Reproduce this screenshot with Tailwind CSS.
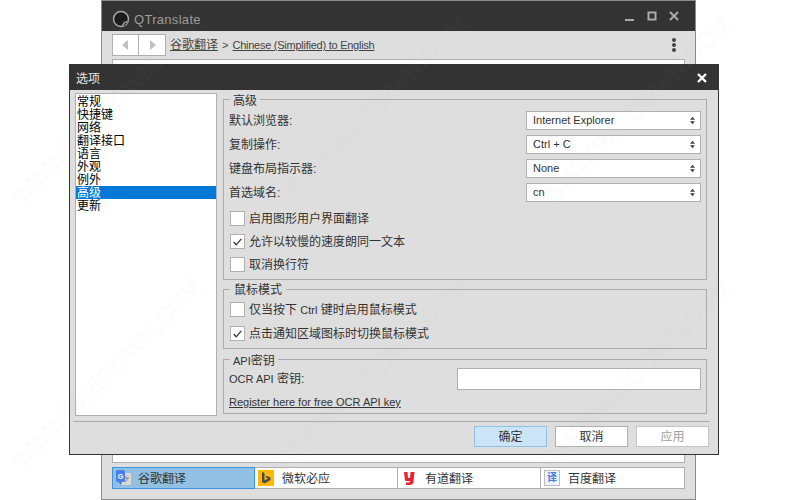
<!DOCTYPE html>
<html lang="zh">
<head>
<meta charset="utf-8">
<script src="https://cdn.jsdelivr.net/npm/@tailwindcss/browser@4"></script>
</head>
<body class="w-[790px] h-[500px] overflow-hidden bg-white relative font-['Liberation_Sans','Noto_Sans_CJK_SC',sans-serif] text-[12px] text-[#333]">

<!-- Back window -->
<div class="absolute left-[101px] top-0 w-[595px] h-[500px] border border-[#8a8a8a] bg-[#dedede] flex flex-col">
  <div class="h-[30px] shrink-0 bg-[#333333] flex items-center">
    <svg class="ml-[10px] mt-[6px]" width="18" height="18" viewBox="0 0 18 18"><circle cx="9" cy="9" r="7.5" fill="#1c1c1c" stroke="#a8a8a8" stroke-width="1.5"/><path d="M11 17 A4 4 0 0 1 16 12" fill="#333" stroke="#a8a8a8" stroke-width="1.2"/></svg>
    <span class="ml-[4px] mt-[8px] text-[13px] text-[#9c9c9c] tracking-[0.3px]">QTranslate</span>
    <div class="ml-auto flex items-center gap-[12px] mr-[16px]">
      <svg width="10" height="10" viewBox="0 0 10 10"><rect x="0" y="8" width="9" height="2" fill="#aaa"/></svg>
      <svg width="10" height="10" viewBox="0 0 10 10"><rect x="1.5" y="1.5" width="7" height="7" fill="none" stroke="#aaa" stroke-width="2"/></svg>
      <svg width="10" height="10" viewBox="0 0 10 10"><path d="M1 1 L9 9 M9 1 L1 9" stroke="#aaa" stroke-width="2"/></svg>
    </div>
  </div>
  <div class="h-[28px] shrink-0 flex items-center pl-[10px] pr-[8px]">
    <div class="w-[54px] h-[22px] flex bg-white border border-[#b0b0b0]">
      <div class="w-[26px] flex items-center justify-center border-r border-[#b0b0b0]"><svg width="7" height="10" viewBox="0 0 7 10"><path d="M6 0 L0 5 L6 10 Z" fill="#c0c0c0"/></svg></div>
      <div class="flex-1 flex items-center justify-center"><svg width="7" height="10" viewBox="0 0 7 10"><path d="M1 0 L7 5 L1 10 Z" fill="#c0c0c0"/></svg></div>
    </div>
    <span class="ml-[4px] underline text-[#444]">谷歌翻译</span>
    <span class="ml-[4px] text-[11px] text-[#444]">&gt;</span>
    <span class="ml-[4px] underline text-[#444] text-[11px] tracking-[-0.25px]">Chinese (Simplified) to English</span>
    <div class="ml-auto flex flex-col gap-[1px] mr-[11px]">
      <span class="w-[4px] h-[4px] rounded-full bg-[#444]"></span>
      <span class="w-[4px] h-[4px] rounded-full bg-[#444]"></span>
      <span class="w-[4px] h-[4px] rounded-full bg-[#444]"></span>
    </div>
  </div>
  <div class="flex-1 mx-[10px] bg-white border border-[#b0b0b0]"></div>
  <div class="h-[22px] shrink-0 mx-[10px] mt-[4px] mb-[10px] flex bg-white border border-[#b0b0b0]">
    <div class="w-[143px] -m-[1px] mr-0 h-[22px] flex items-center bg-[#92c0e4] border border-[#3b94e4]">
      <svg class="ml-[2px]" width="17" height="17" viewBox="0 0 17 17"><rect x="7" y="3" width="9" height="12" rx="1" fill="#d8d8d8"/><path d="M9 8h5M11.500 6.500v1.500M10 12l3-4" stroke="#8a8a8a" stroke-width="1" fill="none"/><rect x="1" y="0" width="9" height="12" rx="1.500" fill="#4a7fe8"/><path d="M6 12v2.500l-2.500-2.500z" fill="#3a62c0"/><text x="5.500" y="8.500" font-size="7" font-weight="700" fill="#fff" text-anchor="middle">G</text></svg>
      <span class="ml-[6px] mt-[1px]">谷歌翻译</span>
    </div>
    <div class="w-[143px] flex items-center border-r border-[#b0b0b0]">
      <svg class="ml-[3px]" width="16" height="16" viewBox="0 0 16 16"><rect width="16" height="16" fill="#ffb900"/><path d="M4 2 L6.500 3 V10.500 L10 8.500 L8.300 7.500 L7.500 5.500 L12.500 7.500 V10 L6.500 13.500 L4 12 Z" fill="#4a4a4a"/></svg>
      <span class="ml-[8px] mt-[1px]">微软必应</span>
    </div>
    <div class="w-[143px] flex items-center border-r border-[#b0b0b0]">
      <svg class="ml-[6px]" width="11" height="13" viewBox="0 0 11 13"><path d="M0 0 H3.500 L4 6 H6 L6.500 0 H10.500 L9.500 9.500 Q9 13 5.500 13 H2 V10.500 H5 Q6 10.500 6 9 H2.500 Q1 9 0.800 7.500 Z" fill="#e8232e"/></svg>
      <span class="ml-[10px] mt-[1px]">有道翻译</span>
    </div>
    <div class="flex-1 flex items-center">
      <div class="ml-[3px] w-[16px] h-[16px] border border-[#bdbdbd] bg-[#eef2fa] flex items-center justify-center text-[10px] font-bold leading-none text-[#3f7fe0]">译</div>
      <span class="ml-[8px] mt-[1px]">百度翻译</span>
    </div>
  </div>
</div>

<!-- Options dialog -->
<div class="absolute left-[69px] top-[64px] w-[650px] h-[391px] border border-[#333333] bg-[#dedede] flex flex-col">
  <div class="h-[25px] shrink-0 bg-[#333333] flex items-center justify-between text-white">
    <span class="ml-[6px] mt-[2px] text-[12px] text-[#e8e8e8]">选项</span>
    <svg class="mr-[11px]" width="10" height="10" viewBox="0 0 10 10"><path d="M1 1 L9 9 M9 1 L1 9" stroke="#fff" stroke-width="2.400"/></svg>
  </div>
  <div class="flex-1 flex pl-[5px]">
    <div class="w-[142px] mt-[3px] h-[323px] bg-white border border-[#b0b0b0] pt-[1px] text-black leading-[15px]">
      <div class="pl-[1px] h-[13px]">常规</div>
      <div class="pl-[1px] h-[13px]">快捷键</div>
      <div class="pl-[1px] h-[13px]">网络</div>
      <div class="pl-[1px] h-[13px]">翻译接口</div>
      <div class="pl-[1px] h-[13px]">语言</div>
      <div class="pl-[1px] h-[13px]">外观</div>
      <div class="pl-[1px] h-[13px]">例外</div>
      <div class="pl-[1px] h-[13px] bg-[#0078d7] text-white">高级</div>
      <div class="pl-[1px] h-[13px]">更新</div>
    </div>
    <div class="ml-[6px] w-[484px] flex flex-col pt-[9px]">
      <!-- group 高级 -->
      <div class="relative h-[181px] border border-[#ababab] px-[5px] pt-[11px]">
        <span class="absolute left-[6px] -top-[6px] px-[3px] h-[14px] leading-[14px] bg-[#dedede]">高级</span>
        <div class="flex flex-col gap-[5px]">
          <div class="h-[19px] flex items-center justify-between"><span>默认浏览器:</span>
            <div class="w-[175px] h-[19px] flex items-center justify-between bg-white border border-[#b0b0b0] pl-[6px] pr-[5px]"><span class="text-[11px]">Internet Explorer</span><svg width="5" height="9" viewBox="0 0 6 9"><path d="M3 0 L6 3.500 H0 Z M3 9 L0 5.500 H6 Z" fill="#444"/></svg></div>
          </div>
          <div class="h-[19px] flex items-center justify-between"><span>复制操作:</span>
            <div class="w-[175px] h-[19px] flex items-center justify-between bg-white border border-[#b0b0b0] pl-[6px] pr-[5px]"><span class="text-[11px]">Ctrl + C</span><svg width="5" height="9" viewBox="0 0 6 9"><path d="M3 0 L6 3.500 H0 Z M3 9 L0 5.500 H6 Z" fill="#444"/></svg></div>
          </div>
          <div class="h-[19px] flex items-center justify-between"><span>键盘布局指示器:</span>
            <div class="w-[175px] h-[19px] flex items-center justify-between bg-white border border-[#b0b0b0] pl-[6px] pr-[5px]"><span class="text-[11px]">None</span><svg width="5" height="9" viewBox="0 0 6 9"><path d="M3 0 L6 3.500 H0 Z M3 9 L0 5.500 H6 Z" fill="#444"/></svg></div>
          </div>
          <div class="h-[19px] flex items-center justify-between"><span>首选域名:</span>
            <div class="w-[175px] h-[19px] flex items-center justify-between bg-white border border-[#b0b0b0] pl-[6px] pr-[5px]"><span class="text-[11px]">cn</span><svg width="5" height="9" viewBox="0 0 6 9"><path d="M3 0 L6 3.500 H0 Z M3 9 L0 5.500 H6 Z" fill="#444"/></svg></div>
          </div>
        </div>
        <div class="flex flex-col gap-[8px] pt-[9px] pl-[1px]">
          <div class="h-[15px] flex items-center gap-[4px]"><span class="w-[15px] h-[15px] bg-white border border-[#b0b0b0]"></span><span>启用图形用户界面翻译</span></div>
          <div class="h-[15px] flex items-center gap-[4px]"><span class="w-[15px] h-[15px] bg-white border border-[#b0b0b0] flex items-center justify-center"><svg width="9" height="8" viewBox="0 0 9 8"><path d="M0.700 4 L3.200 6.800 L8.300 0.800" fill="none" stroke="#333" stroke-width="1.300"/></svg></span><span>允许以较慢的速度朗同一文本</span></div>
          <div class="h-[15px] flex items-center gap-[4px]"><span class="w-[15px] h-[15px] bg-white border border-[#b0b0b0]"></span><span>取消换行符</span></div>
        </div>
      </div>
      <!-- group 鼠标模式 -->
      <div class="relative h-[60px] mt-[9px] border border-[#ababab] pl-[6px] pt-[12px]">
        <span class="absolute left-[6px] -top-[7px] px-[4px] h-[14px] leading-[14px] bg-[#dedede]">鼠标模式</span>
        <div class="flex flex-col gap-[9px]">
          <div class="h-[15px] flex items-center gap-[4px]"><span class="w-[15px] h-[15px] bg-white border border-[#b0b0b0]"></span><span>仅当按下 <span class="text-[11px]">Ctrl</span> 键时启用鼠标模式</span></div>
          <div class="h-[15px] flex items-center gap-[4px]"><span class="w-[15px] h-[15px] bg-white border border-[#b0b0b0] flex items-center justify-center"><svg width="9" height="8" viewBox="0 0 9 8"><path d="M0.700 4 L3.200 6.800 L8.300 0.800" fill="none" stroke="#333" stroke-width="1.300"/></svg></span><span>点击通知区域图标时切换鼠标模式</span></div>
        </div>
      </div>
      <!-- group API密钥 -->
      <div class="relative h-[55px] mt-[10px] border border-[#ababab] px-[5px] pt-[8px]">
        <span class="absolute left-[6px] -top-[6px] px-[3px] h-[14px] leading-[14px] bg-[#dedede]"><span class="text-[11px]">API</span>密钥</span>
        <div class="h-[22px] flex items-center justify-between"><span><span class="text-[11px]">OCR API</span> 密钥:</span><div class="w-[244px] h-[22px] bg-white border border-[#b0b0b0]"></div></div>
        <div class="mt-[5px] h-[14px] leading-[14px] text-[11px] underline">Register here for free OCR API key</div>
      </div>
    </div>
  </div>
  <div class="shrink-0 mx-[3px] mr-[8px] border-t border-[#ababab]"></div>
  <div class="shrink-0 flex justify-end gap-[8px] pt-[4px] pb-[7px] pr-[9px]">
    <div class="w-[73px] h-[21px] flex items-center justify-center bg-[#cce4f7] border border-[#8fc3e6]">确定</div>
    <div class="w-[73px] h-[21px] flex items-center justify-center bg-white border border-[#b0b0b0]">取消</div>
    <div class="w-[73px] h-[21px] flex items-center justify-center bg-white border border-[#c4c4c4] text-[#a0a0a0]">应用</div>
  </div>
</div>

<!-- Watermark -->
<div class="absolute left-[-33px] top-[96px] w-[280px] h-[28px] leading-[28px] text-center text-[24px] whitespace-nowrap text-transparent [-webkit-text-stroke:1px_rgba(170,170,170,0.07)] -rotate-45 pointer-events-none">WWW.WEIDOWN.COM</div>
<div class="absolute left-[232px] top-[96px] w-[280px] h-[28px] leading-[28px] text-center text-[24px] whitespace-nowrap text-transparent [-webkit-text-stroke:1px_rgba(170,170,170,0.07)] -rotate-45 pointer-events-none">WWW.WEIDOWN.COM</div>
<div class="absolute left-[496px] top-[96px] w-[280px] h-[28px] leading-[28px] text-center text-[24px] whitespace-nowrap text-transparent [-webkit-text-stroke:1px_rgba(170,170,170,0.07)] -rotate-45 pointer-events-none">WWW.WEIDOWN.COM</div>
<div class="absolute left-[-33px] top-[360px] w-[280px] h-[28px] leading-[28px] text-center text-[24px] whitespace-nowrap text-transparent [-webkit-text-stroke:1px_rgba(170,170,170,0.07)] -rotate-45 pointer-events-none">WWW.WEIDOWN.COM</div>
<div class="absolute left-[232px] top-[360px] w-[280px] h-[28px] leading-[28px] text-center text-[24px] whitespace-nowrap text-transparent [-webkit-text-stroke:1px_rgba(170,170,170,0.07)] -rotate-45 pointer-events-none">WWW.WEIDOWN.COM</div>
<div class="absolute left-[496px] top-[360px] w-[280px] h-[28px] leading-[28px] text-center text-[24px] whitespace-nowrap text-transparent [-webkit-text-stroke:1px_rgba(170,170,170,0.07)] -rotate-45 pointer-events-none">WWW.WEIDOWN.COM</div>

</body>
</html>
